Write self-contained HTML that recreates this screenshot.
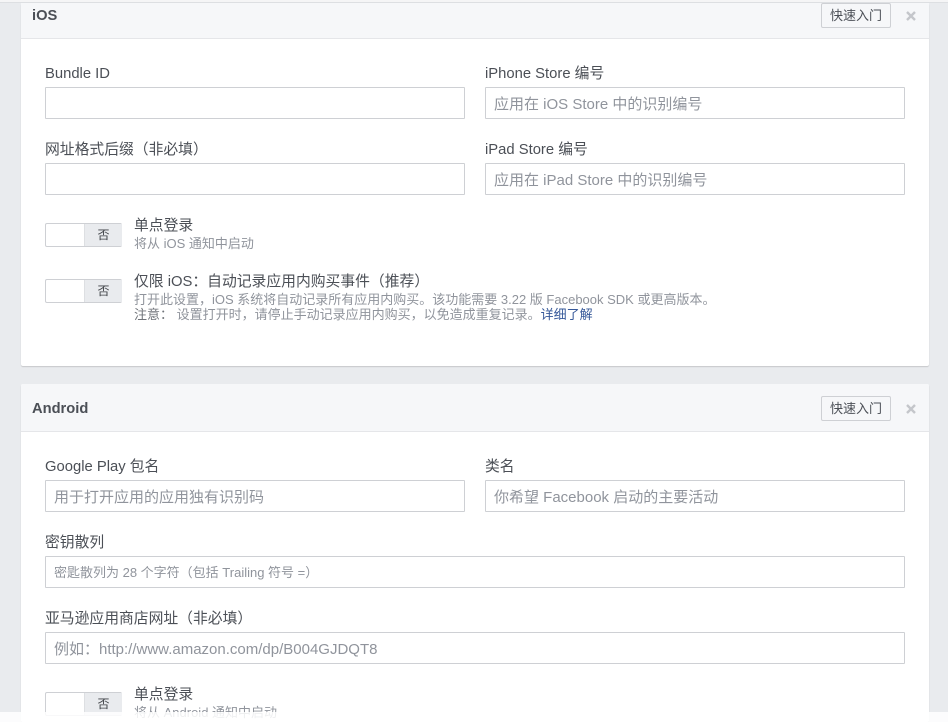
<!DOCTYPE html>
<html lang="zh"><head><meta charset="utf-8"><title>Settings</title>
<style>
html,body{margin:0;padding:0;width:948px;height:722px;overflow:hidden;background:#e9ebee;font-family:"Liberation Sans","Noto Sans CJK SC",sans-serif}
*{box-sizing:border-box}
#w{position:absolute;left:0;top:0;width:948px;height:722px;overflow:hidden}
.a{position:absolute;white-space:nowrap}
.card{position:absolute;left:21px;width:908px;background:#fff;border-radius:2px;box-shadow:0 1px 1px rgba(0,0,0,.15)}
.head{position:absolute;left:21px;width:908px;background:#f6f7f9;border-bottom:1px solid #e5e6e9}
.title{font-size:14.7px;font-weight:bold;color:#4b4f56;line-height:18px;left:32px;margin-top:1px}
.btn{position:absolute;left:821px;width:70px;height:25px;background:#f6f7f9;border:1px solid #ced0d4;border-radius:2px;font-size:13px;line-height:23px;text-align:center;color:#4b4f56}
.x{position:absolute;left:905px;width:12px;height:12px}
.l{font-size:14.8px;line-height:18px;color:#4b4f56;margin-top:1px}
.i{position:absolute;height:32px;background:#fff;border:1px solid #ced0d4;border-radius:1px;font-size:15px;line-height:31px;padding-top:1px;padding-left:8px;color:#90949c;white-space:nowrap}
.s{position:absolute;left:45px;width:77px;height:24px;border:1px solid #ced0d4;border-radius:2px;background:#fff}
.s b{position:absolute;left:38px;top:0;width:38px;height:22px;background:#e9ebee;border-left:1px solid #dddfe2;font-weight:normal;font-size:12px;line-height:23px;text-align:center;color:#3f4247}
.h{font-size:13px;line-height:15px;color:#90949c;left:134px}
</style></head><body><div id="w">
<div class="a" style="left:0;top:0;width:948px;height:2px;background:#f5f5f6"></div>
<div class="a" style="left:0;top:2px;width:948px;height:1px;background:#dddfe2"></div>
<div class="card" style="top:3px;height:363px"></div>
<div class="head" style="top:3px;height:36px"></div>
<div class="a title" style="top:6px">iOS</div>
<div class="btn" style="top:3px">快速入门</div>
<svg class="x" style="top:10px" viewBox="0 0 12 12"><path d="M2 2L10 10M10 2L2 10" stroke="#c4c6cb" stroke-width="2.4"/></svg>

<div class="a l" style="left:45px;top:64px">Bundle ID</div>
<div class="i" style="left:45px;top:87px;width:420px"></div>
<div class="a l" style="left:485px;top:64px">iPhone Store 编号</div>
<div class="i" style="left:485px;top:87px;width:420px">应用在 iOS Store 中的识别编号</div>
<div class="a l" style="left:45px;top:140px">网址格式后缀（非必填）</div>
<div class="i" style="left:45px;top:163px;width:420px"></div>
<div class="a l" style="left:485px;top:140px">iPad Store 编号</div>
<div class="i" style="left:485px;top:163px;width:420px">应用在 iPad Store 中的识别编号</div>

<div class="s" style="top:223px"><b>否</b></div>
<div class="a l" style="left:134px;top:216px">单点登录</div>
<div class="a h" style="top:236px">将从 iOS 通知中启动</div>
<div class="s" style="top:279px"><b>否</b></div>
<div class="a l" style="left:134px;top:272px">仅限 iOS：自动记录应用内购买事件（推荐）</div>
<div class="a h" style="top:292px">打开此设置，iOS 系统将自动记录所有应用内购买。该功能需要 3.22 版 Facebook SDK 或更高版本。</div>
<div class="a h" style="top:307px"><span style="color:#6f7379">注意：</span> 设置打开时，请停止手动记录应用内购买，以免造成重复记录。<span style="color:#365899">详细了解</span></div>

<div class="card" style="top:384px;height:338px"></div>
<div class="head" style="top:384px;height:48px;border-radius:2px 2px 0 0"></div>
<div class="a title" style="top:399px">Android</div>
<div class="btn" style="top:396px">快速入门</div>
<svg class="x" style="top:403px" viewBox="0 0 12 12"><path d="M2 2L10 10M10 2L2 10" stroke="#c4c6cb" stroke-width="2.4"/></svg>

<div class="a l" style="left:45px;top:457px">Google Play 包名</div>
<div class="i" style="left:45px;top:480px;width:420px">用于打开应用的应用独有识别码</div>
<div class="a l" style="left:485px;top:457px">类名</div>
<div class="i" style="left:485px;top:480px;width:420px">你希望 Facebook 启动的主要活动</div>
<div class="a l" style="left:45px;top:533px">密钥散列</div>
<div class="i" style="left:45px;top:556px;width:860px;font-size:13px;padding-top:0">密匙散列为 28 个字符（包括 Trailing 符号 =）</div>
<div class="a l" style="left:45px;top:609px">亚马逊应用商店网址（非必填）</div>
<div class="i" style="left:45px;top:632px;width:860px">例如：http://www.amazon.com/dp/B004GJDQT8</div>
<div class="s" style="top:692px"><b>否</b></div>
<div class="a l" style="left:134px;top:685px">单点登录</div>
<div class="a h" style="top:705px">将从 Android 通知中启动</div>
<div class="a" style="left:0;top:712px;width:948px;height:10px;background:rgba(255,255,255,.85)"></div>
</div></body></html>
